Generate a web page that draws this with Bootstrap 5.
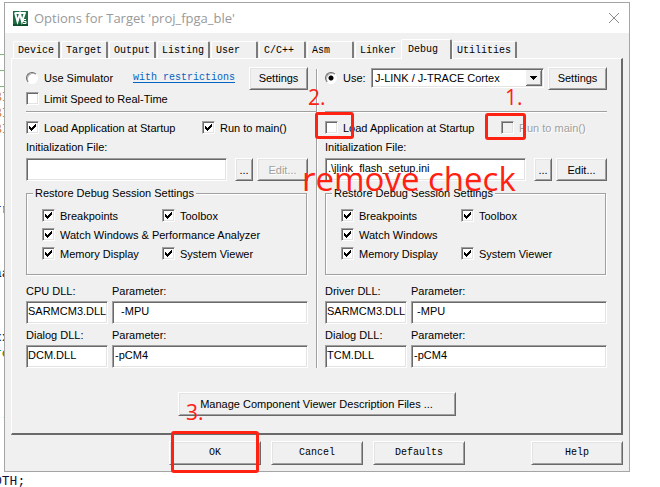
<!DOCTYPE html>
<html lang="en">
<head>
<meta charset="utf-8">
<meta name="viewport" content="width=device-width, initial-scale=1">
<title>Options for Target 'proj_fpga_ble'</title>
<link href="https://cdn.jsdelivr.net/npm/bootstrap@5.3.0/dist/css/bootstrap.min.css" rel="stylesheet">
<style>
  :root { --face: #f0f0f0; --shade: #a0a0a0; --dark: #696969; --lite: #e3e3e3; --red: #ff2112; --mono: "Liberation Mono", monospace; --ui: "Liberation Sans", sans-serif; }
  body { background: #fff; color: #000; font: 11px/16px var(--ui); overflow: hidden; min-height: 100vh; }
  .editor { position: absolute; top: -6px; left: -6px; margin: 0; overflow: hidden; font: 13px/16px var(--mono); color: #101040; }
  .editor .cm { color: #008000; }
  .editor .kw { color: #d08030; }
  .dialog { position: relative; background: var(--face); border: 1px solid #a5a5a5; margin: 2px 30px 0 4px; padding-bottom: 6px; }
  .titlebar { background: #fff; height: 30px; padding: 0 9px 0 8px; gap: 6px; }
  .titlebar h1 { font: 13px/20px "Open Sans", sans-serif; color: #999; margin: 0; }
  .titlebar button { border: 0; background: none; padding: 0; line-height: 0; }
  .tabstrip { padding: 7px 9px 0 8px; height: 25px; }
  .tabstrip button { font: 10px/17px var(--mono); color: #000; background: var(--face); border: 0; border-top: 1px solid #fff; border-left: 1px solid #fff; border-right: 2px solid #7c7c7c; border-radius: 2px 2px 0 0; height: 17px; padding: 0 4px; margin-right: 1px; text-align: left; white-space: nowrap; }
  .tabstrip .tab-mid { width: 47px; }
  .tabstrip .tab-last { border-right: 0; margin-right: 0; width: 46px; }
  .tabstrip .active { height: 20px; width: 51px; padding-left: 6px; margin: 0 0 -1px; position: relative; z-index: 1; }
  .sheet { margin: 0 6px; padding: 7px 14px 17px; border: 1px solid #fff; border-right: 2px solid var(--dark); border-bottom: 2px solid var(--dark); }
  .halves { display: grid; grid-template-columns: minmax(0, 1fr) 1px minmax(0, 1fr); column-gap: 8px; }
  .divider { background: var(--shade); box-shadow: 1px 0 #fff; margin-top: 3px; }
  .rule { height: 2px; margin: 4px 0 6px; border-top: 1px solid var(--shade); background: #fff; }
  .rule-wide { margin-right: -8px; }
  .line-top { height: 24px; }
  .line { height: 17px; }
  .raised { font: 11px/14px var(--ui); color: #000; background: var(--face); border: 1px solid; border-color: #fff var(--dark) var(--dark) #fff; border-radius: 0; box-shadow: inset 1px 1px var(--lite), inset -1px -1px var(--shade); padding: 0; height: 23px; white-space: nowrap; }
  .raised:hover, .raised:active { background: var(--face) !important; color: #000 !important; }
  .raised:disabled { color: var(--shade); background: var(--face); border-color: #fff var(--dark) var(--dark) #fff; opacity: 1; text-shadow: 1px 1px #fff; }
  .w-settings { width: 59px; }
  .w-dots { width: 18px; }
  .w-edit { width: 51px; }
  .w-manage { width: 278px; height: 24px; }
  .w-dll { flex: 0 0 82px; }
  .sunk { font: 11px/14px var(--ui); color: #000; background-color: #fff; border: 1px solid; border-color: var(--shade) #fff #fff var(--shade); border-radius: 0; box-shadow: inset 1px 1px var(--dark), inset -1px -1px var(--lite); height: 23px; padding: 0 0 4px 2px; min-width: 0; }
  .sunk:focus { border-color: var(--shade) #fff #fff var(--shade); box-shadow: inset 1px 1px var(--dark), inset -1px -1px var(--lite); }
  .w-dll .sunk { padding-left: 1px; }
  .device { height: 20px; padding: 0 20px 0 3px; background: #fff url("data:image/svg+xml,%3Csvg xmlns='http://www.w3.org/2000/svg' width='16' height='16' shape-rendering='crispEdges'%3E%3Cpath fill='%23f0f0f0' d='M0 0h16v16H0z'/%3E%3Cpath fill='none' stroke='%23696969' d='M0 15.5h15.5V0'/%3E%3Cpath fill='none' stroke='%23a0a0a0' d='M1 14.5h13.5V1'/%3E%3Cpath d='M4 6h7v1H4zM5 7h5v1H5zM6 8h3v1H6zM7 9h1v1H7z'/%3E%3C/svg%3E") no-repeat right 1px top 1px / 16px 16px; }
  .form-check-input.tick { width: 13px; height: 13px; margin: 0 5px 0 0; flex: none; float: none; border: 1px solid; border-color: var(--shade) #fff #fff var(--shade); border-radius: 0; background-color: #fff; box-shadow: inset 1px 1px var(--dark), inset -1px -1px var(--lite); }
  .form-check-input.tick:checked { background: #fff url("data:image/svg+xml,%3Csvg xmlns='http://www.w3.org/2000/svg' viewBox='0 0 11 11' shape-rendering='crispEdges'%3E%3Cpath d='M2 4h1v1h1v1h1V5h1V4h1V3h1V2h1v3H8v1H7v1H6v1H5v1H4V8H3V7H2z'/%3E%3C/svg%3E") no-repeat center / 11px 11px; }
  .form-check-input.tick:disabled { background-color: var(--face); opacity: 1; }
  .form-check-input.spot { width: 12px; height: 12px; margin: 0 6px 0 0; flex: none; float: none; border: 1px solid; border-color: var(--dark) #fff #fff var(--dark); background: #fff; box-shadow: inset 1px 1px #b8b8b8; }
  .form-check-input.spot:checked { background: #fff radial-gradient(circle at 50% 50%, #000 2px, #fff0 3px); }
  .form-check-input.tick:disabled ~ label { color: var(--shade); opacity: 1; text-shadow: 1px 1px #fff; }
  .startup { flex: 0 0 176px; }
  .opt { display: flex; align-items: center; position: relative; white-space: nowrap; }
  .use { flex: 0 0 46px; }
  .help-link { font: 10px/16px var(--mono); color: #0563c1; text-decoration: underline; text-underline-offset: 2px; margin: 0 14px 0 auto; white-space: nowrap; }
  .cap { display: block; margin: 3px 0; white-space: nowrap; }
  .dlls .cap { margin: 3px 0 2px; }
  .dlls { gap: 4px; }
  .session { border: 0; position: relative; margin: 4px 0 4px; padding: 5px 0 13px 16px; }
  .session::before { content: ""; position: absolute; inset: -8px 1px 1px 0; border: 1px solid var(--shade); box-shadow: 1px 1px #fff, inset 1px 1px #fff; pointer-events: none; }
  .session legend { float: none; width: auto; font: inherit; margin: 0 0 0 -9px; padding: 0 2px; background: var(--face); position: relative; z-index: 1; }
  .session .choices { display: grid; grid-template-columns: 120px 1fr; grid-auto-rows: 19px; }
  .session .full { grid-column: 1 / -1; }
  .footer-row { margin: 6px 6px 0; padding-left: 158px; gap: 10px; }
  .footer-row .raised { width: 92px; height: 24px; font: 10px/14px var(--mono); }
  .note { position: absolute; color: var(--red); font: 21px/24px "Open Sans", sans-serif; pointer-events: none; z-index: 3; white-space: nowrap; }
  .note-box { position: absolute; border: 3px solid var(--red); border-radius: 3px; pointer-events: none; z-index: 3; }
  .box-load { left: -10px; top: -7px; width: 39px; height: 27px; }
  .box-run { left: -16px; top: -6px; width: 41px; height: 27px; }
  .box-ok { left: 2px; top: -10px; width: 88px; height: 42px; }
  .n-two { left: -17px; top: -34px; }
  .n-one { left: 4px; top: -34px; }
  .n-three { left: 17px; top: -41px; }
  .n-remove { font-size: 33px; line-height: 40px; left: -23px; top: 1px; }
</style>
<script src="https://cdn.jsdelivr.net/npm/bootstrap@5.3.0/dist/js/bootstrap.bundle.min.js"></script>
</head>
<body>
<pre class="editor" aria-hidden="true">



<span class="cm">__</span>
<span class="cm">__</span>
<span class="cm">__</span>
<span class="kw">BI</span>
<span class="kw">BI</span>
<span class="kw">BI</span>




rr



aa



xx
<span class="cm">rc</span>



<span class="cm">--</span>



DTH;</pre>

<main class="dialog">
  <header class="titlebar d-flex align-items-center">
    <svg width="15" height="15" viewBox="0 0 15 15" aria-hidden="true"><path fill="#1c6b41" d="M0 0h15v15H0z"/><path fill="#0f4f2d" d="M0 13h15v2H0z"/><path fill="none" stroke="#fff" stroke-width="2" d="M2 1.500l2.500 9 2.500-8 2 8 3-9"/><path fill="#fff" d="M2 1h11l-1 2H3z"/><path fill="none" stroke="#fff" d="M13 8.500h-2.500v2H13v2h-3"/></svg>
    <h1>Options for Target 'proj_fpga_ble'</h1>
    <button type="button" class="ms-auto" aria-label="Close"><svg width="12" height="12" viewBox="0 0 12 12" fill="none" stroke="#8a8a8a"><path d="M1 1l10 10M11 1L1 11"/></svg></button>
  </header>

  <nav class="tabstrip d-flex align-items-end" role="tablist">
    <button type="button" role="tab" class="tab-mid">Device</button>
    <button type="button" role="tab" class="tab-mid">Target</button>
    <button type="button" role="tab" class="tab-mid">Output</button>
    <button type="button" role="tab">Listing</button>
    <button type="button" role="tab" class="tab-mid">User</button>
    <button type="button" role="tab" class="tab-mid">C/C++</button>
    <button type="button" role="tab" class="tab-mid">Asm</button>
    <button type="button" role="tab" class="tab-last">Linker</button>
    <button type="button" role="tab" class="active" aria-selected="true">Debug</button>
    <button type="button" role="tab">Utilities</button>
  </nav>

  <section class="sheet">
    <div class="halves">
      <div>
        <div class="line-top d-flex align-items-center">
          <div class="opt"><input class="form-check-input spot" type="radio" name="target" id="sim"><label for="sim">Use Simulator</label></div>
          <a class="help-link" href="#restrictions">with restrictions</a>
          <button type="button" class="btn raised w-settings">Settings</button>
        </div>
        <div class="line opt"><input class="form-check-input tick" type="checkbox" id="limit"><label for="limit">Limit Speed to Real-Time</label></div>
        <div class="rule rule-wide"></div>
        <div class="line d-flex">
          <div class="opt startup"><input class="form-check-input tick" type="checkbox" id="load1" checked><label for="load1">Load Application at Startup</label></div>
          <div class="opt"><input class="form-check-input tick" type="checkbox" id="run1" checked><label for="run1">Run to main()</label></div>
        </div>
        <label class="cap" for="init1">Initialization File:</label>
        <div class="d-flex">
          <input class="form-control sunk me-2" type="text" id="init1">
          <button type="button" class="btn raised w-dots me-1 flex-shrink-0">...</button>
          <button type="button" class="btn raised w-edit flex-shrink-0" disabled>Edit...</button>
        </div>
        <fieldset class="session">
          <legend>Restore Debug Session Settings</legend>
          <div class="choices">
            <div class="opt"><input class="form-check-input tick" type="checkbox" id="bp1" checked><label for="bp1">Breakpoints</label></div>
            <div class="opt"><input class="form-check-input tick" type="checkbox" id="tb1" checked><label for="tb1">Toolbox</label></div>
            <div class="opt full"><input class="form-check-input tick" type="checkbox" id="ww1" checked><label for="ww1">Watch Windows &amp; Performance Analyzer</label></div>
            <div class="opt"><input class="form-check-input tick" type="checkbox" id="md1" checked><label for="md1">Memory Display</label></div>
            <div class="opt"><input class="form-check-input tick" type="checkbox" id="sv1" checked><label for="sv1">System Viewer</label></div>
          </div>
        </fieldset>
        <div class="dlls d-flex">
          <div class="w-dll"><label class="cap" for="cpu1">CPU DLL:</label><input class="form-control sunk" type="text" id="cpu1" value="SARMCM3.DLL"></div>
          <div class="flex-fill"><label class="cap" for="cpar1">Parameter:</label><input class="form-control sunk" type="text" id="cpar1" value="  -MPU"></div>
        </div>
        <div class="dlls d-flex">
          <div class="w-dll"><label class="cap" for="dlg1">Dialog DLL:</label><input class="form-control sunk" type="text" id="dlg1" value="DCM.DLL"></div>
          <div class="flex-fill"><label class="cap" for="dpar1">Parameter:</label><input class="form-control sunk" type="text" id="dpar1" value="-pCM4"></div>
        </div>
      </div>

      <div class="divider"></div>

      <div>
        <div class="line-top d-flex align-items-center">
          <div class="opt use"><input class="form-check-input spot" type="radio" name="target" id="hw" checked><label for="hw">Use:</label></div>
          <select class="form-select sunk device flex-fill me-1" aria-label="Debug driver"><option>J-LINK / J-TRACE Cortex</option></select>
          <button type="button" class="btn raised w-settings flex-shrink-0">Settings</button>
        </div>
        <div class="line"></div>
        <div class="rule"></div>
        <div class="line d-flex">
          <div class="opt startup"><input class="form-check-input tick" type="checkbox" id="load2"><label for="load2">Load Application at Startup</label><span class="note-box box-load"></span><span class="note n-two">2.</span></div>
          <div class="opt"><input class="form-check-input tick" type="checkbox" id="run2" disabled><label for="run2">Run to main()</label><span class="note-box box-run"></span><span class="note n-one">1.</span></div>
        </div>
        <label class="cap" for="init2">Initialization File:</label>
        <div class="d-flex position-relative">
          <input class="form-control sunk me-2" type="text" id="init2" value=".\jlink_flash_setup.ini">
          <button type="button" class="btn raised w-dots me-1 flex-shrink-0">...</button>
          <button type="button" class="btn raised w-edit flex-shrink-0">Edit...</button>
          <span class="note n-remove">remove check</span>
        </div>
        <fieldset class="session">
          <legend>Restore Debug Session Settings</legend>
          <div class="choices">
            <div class="opt"><input class="form-check-input tick" type="checkbox" id="bp2" checked><label for="bp2">Breakpoints</label></div>
            <div class="opt"><input class="form-check-input tick" type="checkbox" id="tb2" checked><label for="tb2">Toolbox</label></div>
            <div class="opt full"><input class="form-check-input tick" type="checkbox" id="ww2" checked><label for="ww2">Watch Windows</label></div>
            <div class="opt"><input class="form-check-input tick" type="checkbox" id="md2" checked><label for="md2">Memory Display</label></div>
            <div class="opt"><input class="form-check-input tick" type="checkbox" id="sv2" checked><label for="sv2">System Viewer</label></div>
          </div>
        </fieldset>
        <div class="dlls d-flex">
          <div class="w-dll"><label class="cap" for="drv2">Driver DLL:</label><input class="form-control sunk" type="text" id="drv2" value="SARMCM3.DLL"></div>
          <div class="flex-fill"><label class="cap" for="cpar2">Parameter:</label><input class="form-control sunk" type="text" id="cpar2" value=" -MPU"></div>
        </div>
        <div class="dlls d-flex">
          <div class="w-dll"><label class="cap" for="dlg2">Dialog DLL:</label><input class="form-control sunk" type="text" id="dlg2" value="TCM.DLL"></div>
          <div class="flex-fill"><label class="cap" for="dpar2">Parameter:</label><input class="form-control sunk" type="text" id="dpar2" value="-pCM4"></div>
        </div>
      </div>
    </div>
    <div class="text-center mt-4"><button type="button" class="btn raised w-manage">Manage Component Viewer Description Files ...</button></div>
  </section>

  <footer class="footer-row d-flex">
    <div class="position-relative">
      <button type="button" class="btn raised">OK</button>
      <span class="note-box box-ok"></span><span class="note n-three">3.</span>
    </div>
    <button type="button" class="btn raised">Cancel</button>
    <button type="button" class="btn raised">Defaults</button>
    <button type="button" class="btn raised ms-auto">Help</button>
  </footer>
</main>
</body>
</html>
